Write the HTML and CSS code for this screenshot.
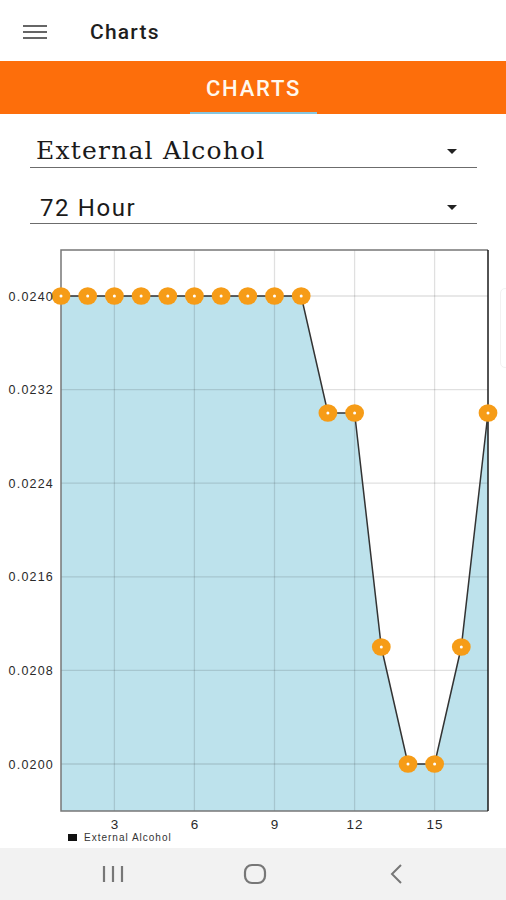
FILE: index.html
```html
<!DOCTYPE html>
<html lang="en">

<head>
    <meta charset="UTF-8">
    <meta name="viewport" content="width=device-width, initial-scale=1.0">
    <title>Charts</title>
    <link rel="stylesheet" href="styles.css">
</head>

<body>
    <div id="app">
        <div class="appbar">
            <svg class="menu-icon" width="24" height="14" viewBox="0 0 24 14">
                <path d="M0 1h24M0 7h24M0 13h24" stroke="#666" stroke-width="2" />
            </svg>
            <div class="appbar-title">Charts</div>
        </div>

        <div class="tabs">
            <div class="tab active">CHARTS</div>
        </div>

        <div class="selects">
            <div class="select select-serif">
                <span class="select-text">External Alcohol</span>
                <span class="select-arrow"></span>
            </div>
            <div class="select select-sans">
                <span class="select-text">72 Hour</span>
                <span class="select-arrow"></span>
            </div>
        </div>

        <div class="chart">
            <svg width="506" height="608" viewBox="0 240 506 608">
                <!-- area under the line -->
                <polygon class="area" points="61,811 61,296 87.7,296 114.4,296 141.1,296 167.8,296 194.4,296 221.1,296 247.8,296 274.5,296 301.2,296 327.9,413 354.6,413 381.3,647 408,764 434.6,764 461.3,647 488,413 488,811" />

                <!-- grid -->
                <g class="grid">
                    <line x1="61" y1="296" x2="488" y2="296" />
                    <line x1="61" y1="389.6" x2="488" y2="389.6" />
                    <line x1="61" y1="483.2" x2="488" y2="483.2" />
                    <line x1="61" y1="576.8" x2="488" y2="576.8" />
                    <line x1="61" y1="670.4" x2="488" y2="670.4" />
                    <line x1="61" y1="764" x2="488" y2="764" />
                    <line x1="114.4" y1="250" x2="114.4" y2="811" />
                    <line x1="194.4" y1="250" x2="194.4" y2="811" />
                    <line x1="274.5" y1="250" x2="274.5" y2="811" />
                    <line x1="354.6" y1="250" x2="354.6" y2="811" />
                    <line x1="434.6" y1="250" x2="434.6" y2="811" />
                </g>

                <!-- frame -->
                <path class="frame" d="M488 250H61V811H488" />
                <line class="frame-right" x1="488" y1="250" x2="488" y2="811" />

                <!-- data line -->
                <polyline class="series" points="61,296 87.7,296 114.4,296 141.1,296 167.8,296 194.4,296 221.1,296 247.8,296 274.5,296 301.2,296 327.9,413 354.6,413 381.3,647 408,764 434.6,764 461.3,647 488,413" />

                <!-- markers -->
                <g class="markers">
                    <ellipse cx="61" cy="296" rx="9.4" ry="8.8" />
                    <ellipse cx="87.7" cy="296" rx="9.4" ry="8.8" />
                    <ellipse cx="114.4" cy="296" rx="9.4" ry="8.8" />
                    <ellipse cx="141.1" cy="296" rx="9.4" ry="8.8" />
                    <ellipse cx="167.8" cy="296" rx="9.4" ry="8.8" />
                    <ellipse cx="194.4" cy="296" rx="9.4" ry="8.8" />
                    <ellipse cx="221.1" cy="296" rx="9.4" ry="8.8" />
                    <ellipse cx="247.8" cy="296" rx="9.4" ry="8.8" />
                    <ellipse cx="274.5" cy="296" rx="9.4" ry="8.8" />
                    <ellipse cx="301.2" cy="296" rx="9.4" ry="8.8" />
                    <ellipse cx="327.9" cy="413" rx="9.4" ry="8.8" />
                    <ellipse cx="354.6" cy="413" rx="9.4" ry="8.8" />
                    <ellipse cx="381.3" cy="647" rx="9.4" ry="8.8" />
                    <ellipse cx="408" cy="764" rx="9.4" ry="8.8" />
                    <ellipse cx="434.6" cy="764" rx="9.4" ry="8.8" />
                    <ellipse cx="461.3" cy="647" rx="9.4" ry="8.8" />
                    <ellipse cx="488" cy="413" rx="9.4" ry="8.8" />
                </g>
                <g class="marker-dots">
                    <circle cx="61" cy="296" r="1.5" />
                    <circle cx="87.7" cy="296" r="1.5" />
                    <circle cx="114.4" cy="296" r="1.5" />
                    <circle cx="141.1" cy="296" r="1.5" />
                    <circle cx="167.8" cy="296" r="1.5" />
                    <circle cx="194.4" cy="296" r="1.5" />
                    <circle cx="221.1" cy="296" r="1.5" />
                    <circle cx="247.8" cy="296" r="1.5" />
                    <circle cx="274.5" cy="296" r="1.5" />
                    <circle cx="301.2" cy="296" r="1.5" />
                    <circle cx="327.9" cy="413" r="1.5" />
                    <circle cx="354.6" cy="413" r="1.5" />
                    <circle cx="381.3" cy="647" r="1.5" />
                    <circle cx="408" cy="764" r="1.5" />
                    <circle cx="434.6" cy="764" r="1.5" />
                    <circle cx="461.3" cy="647" r="1.5" />
                    <circle cx="488" cy="413" r="1.5" />
                </g>

                <!-- y axis -->
                <g class="y-labels">
                    <text x="54" y="300.5">0.0240</text>
                    <text x="54" y="394">0.0232</text>
                    <text x="54" y="487.5">0.0224</text>
                    <text x="54" y="581">0.0216</text>
                    <text x="54" y="675">0.0208</text>
                    <text x="54" y="768.5">0.0200</text>
                </g>

                <!-- x axis -->
                <g class="x-labels">
                    <text x="115" y="829">3</text>
                    <text x="195" y="829">6</text>
                    <text x="275" y="829">9</text>
                    <text x="355" y="829">12</text>
                    <text x="435" y="829">15</text>
                </g>

                <!-- legend -->
                <rect x="68" y="834" width="9" height="7" fill="#111" />
                <text class="legend" x="84" y="841">External Alcohol</text>
            </svg>
        </div>

        <div class="navbar">
            <div class="nav-btn">
                <svg width="22" height="18" viewBox="0 0 22 18">
                    <path d="M2 1v16M11 1v16M20 1v16" stroke="#777" stroke-width="2.2" />
                </svg>
            </div>
            <div class="nav-btn">
                <svg width="24" height="22" viewBox="0 0 24 22">
                    <rect x="2" y="2" width="20" height="18" rx="7" fill="none" stroke="#777" stroke-width="2.2" />
                </svg>
            </div>
            <div class="nav-btn">
                <svg width="14" height="20" viewBox="0 0 14 20">
                    <path d="M11 1L2 10l9 9" fill="none" stroke="#777" stroke-width="2" />
                </svg>
            </div>
        </div>

        <div class="edge-handle"></div>
    </div>
</body>

</html>
```

FILE: styles.css
```css
* {
    box-sizing: border-box;
}

body {
    margin: 0;
    background: #fff;
    font-family: Roboto, "Liberation Sans", sans-serif;
    color: #222;
}

#app {
    position: relative;
    width: 506px;
    height: 900px;
    display: flex;
    flex-direction: column;
    overflow: hidden;
}

/* top app bar */
.appbar {
    height: 61px;
    flex: none;
    display: flex;
    align-items: center;
    padding-left: 23px;
    padding-top: 2px;
}

.menu-icon {
    display: block;
}

.appbar-title {
    margin-left: 43px;
    font-size: 21px;
    font-weight: 500;
    letter-spacing: 1.2px;
    color: #1e1e1e;
}

/* orange tab bar */
.tabs {
    height: 53px;
    flex: none;
    background: #fd6e0b;
    display: flex;
    justify-content: center;
}

.tab {
    width: 127px;
    display: flex;
    align-items: center;
    justify-content: center;
    font-size: 22px;
    font-weight: 500;
    letter-spacing: 1.8px;
    color: #fff8ee;
    padding-top: 3px;
    margin-left: 1px;
}

.tab.active {
    border-bottom: 2px solid #86c6df;
}

/* dropdowns */
.selects {
    height: 126px;
    flex: none;
    padding: 14px 29px 0 30px;
    display: flex;
    flex-direction: column;
    gap: 16px;
}

.select {
    height: 40px;
    display: flex;
    align-items: flex-end;
    border-bottom: 1.5px solid #6c6c6c;
}

.select-serif .select-text {
    font-family: "DejaVu Serif", "Liberation Serif", serif;
    font-size: 25px;
    letter-spacing: 1.2px;
    padding-left: 6px;
    padding-bottom: 2px;
    color: #1a1a1a;
}

.select-sans .select-text {
    font-size: 24px;
    letter-spacing: 1.6px;
    padding-left: 10px;
    padding-bottom: 1px;
    color: #1a1a1a;
}

.select-arrow {
    margin-left: auto;
    margin-right: 20px;
    margin-bottom: 13px;
    width: 0;
    height: 0;
    border-left: 5px solid transparent;
    border-right: 5px solid transparent;
    border-top: 5px solid #222;
}

/* chart */
.chart {
    height: 608px;
    flex: none;
}

.chart svg {
    display: block;
}

.area {
    fill: #bde2ec;
}

.grid line {
    stroke: rgba(0, 0, 0, 0.12);
    stroke-width: 1.3;
}

.frame {
    fill: none;
    stroke: #777;
    stroke-width: 1.5;
}

.frame-right {
    stroke: #1a1a1a;
    stroke-width: 1.5;
}

.series {
    fill: none;
    stroke: #333;
    stroke-width: 1.5;
}

.markers ellipse {
    fill: #f69c17;
}

.marker-dots circle {
    fill: #fff;
}

.y-labels text {
    font-family: "Liberation Sans", Arial, sans-serif;
    font-size: 12.5px;
    letter-spacing: 1.2px;
    text-anchor: end;
    fill: #2a2a2a;
}

.x-labels text {
    font-family: "Liberation Sans", Arial, sans-serif;
    font-size: 13.5px;
    letter-spacing: 1px;
    text-anchor: middle;
    fill: #2a2a2a;
}

.legend {
    font-family: "Liberation Sans", Arial, sans-serif;
    font-size: 10px;
    letter-spacing: 1px;
    fill: #333;
}

/* system navigation */
.navbar {
    height: 52px;
    flex: none;
    background: #f2f2f2;
    display: flex;
    justify-content: center;
    align-items: center;
    gap: 102px;
    padding-left: 4px;
}

.nav-btn {
    width: 40px;
    display: flex;
    justify-content: center;
}

.nav-btn svg {
    display: block;
}

.edge-handle {
    position: absolute;
    top: 288px;
    right: -4px;
    width: 10px;
    height: 80px;
    border: 1px solid #f2f2f2;
    border-radius: 6px;
}
```
